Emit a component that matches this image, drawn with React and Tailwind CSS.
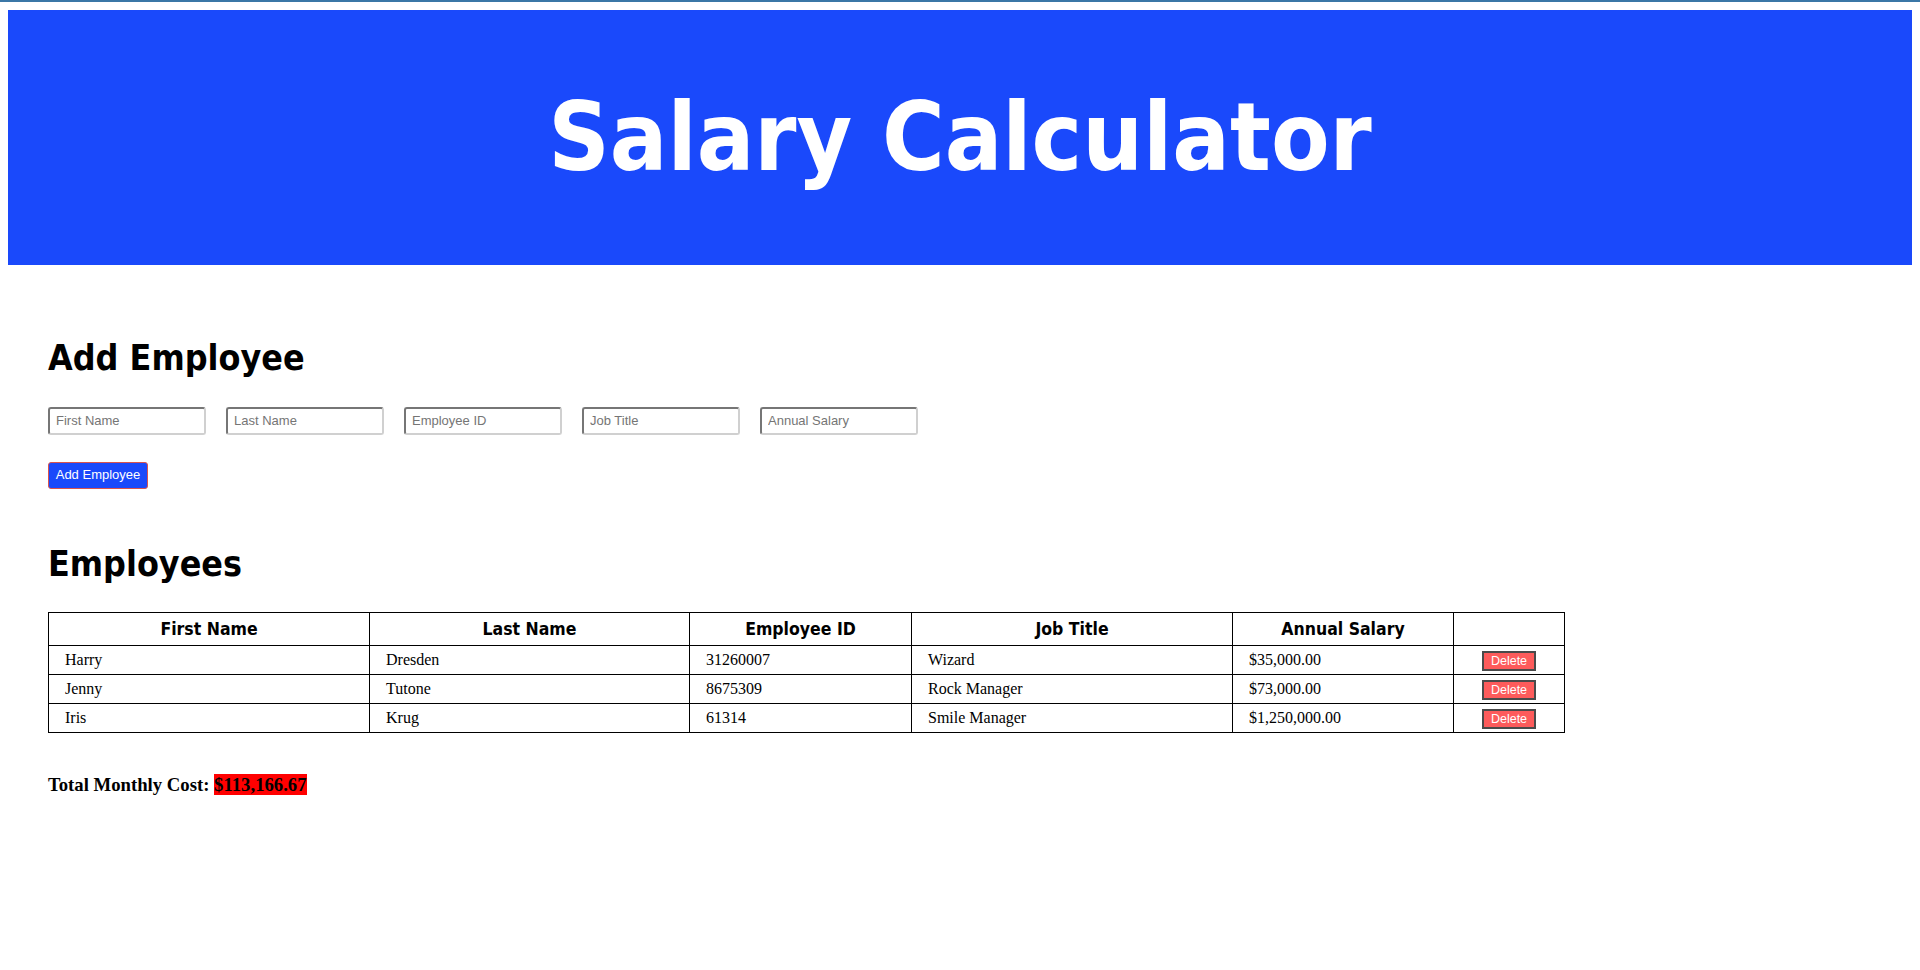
import React from 'react';

const employees = [
  { first: 'Harry', last: 'Dresden', id: '31260007', title: 'Wizard', salary: '$35,000.00' },
  { first: 'Jenny', last: 'Tutone', id: '8675309', title: 'Rock Manager', salary: '$73,000.00' },
  { first: 'Iris', last: 'Krug', id: '61314', title: 'Smile Manager', salary: '$1,250,000.00' },
];

const heading = "[font-family:'DejaVu_Sans_Condensed','DejaVu_Sans',sans-serif]";

export default function App() {
  return (
    <div className="min-h-screen bg-white">
      {/* top strip */}
      <div className="h-[2px] bg-[#3b77a6]" />

      {/* Header */}
      <header className="mx-2 mt-2 h-[255px] flex items-center justify-center bg-[#1a49fb]">
        <h1 className={`${heading} font-bold text-white text-[95px] leading-none`}>Salary Calculator</h1>
      </header>

      <main className="px-[48px]">
        {/* Add Employee */}
        <h2 className={`${heading} font-bold text-black text-[35.5px] leading-none mt-[75px]`}>Add Employee</h2>
        <div className="flex gap-5 mt-[31px]">
          {['First Name', 'Last Name', 'Employee ID', 'Job Title', 'Annual Salary'].map((p) => (
            <input
              key={p}
              placeholder={p}
              className="w-[158px] h-[28px] px-[6px] rounded-[3px] border-2 border-t-[#767676] border-l-[#767676] border-r-[#d0d0d0] border-b-[#d0d0d0] text-[13px] text-black placeholder:text-[#757575] [font-family:'Liberation_Sans',Arial,sans-serif] outline-none"
            />
          ))}
        </div>
        <button className="mt-[27px] w-[100px] h-[27px] rounded-[3px] border border-[#d9534f] bg-[#1a49fb] text-white text-[13px] [font-family:'Liberation_Sans',Arial,sans-serif]">
          Add Employee
        </button>

        {/* Employees */}
        <h2 className={`${heading} font-bold text-black text-[35.5px] leading-none mt-[57px]`}>Employees</h2>
        <table className="mt-[31px] w-[1516px] border-collapse border border-black table-fixed">
          <colgroup>
            <col className="w-[321px]" />
            <col className="w-[320px]" />
            <col className="w-[222px]" />
            <col className="w-[321px]" />
            <col className="w-[221px]" />
            <col className="w-[111px]" />
          </colgroup>
          <thead>
            <tr className="h-[33px]">
              {['First Name', 'Last Name', 'Employee ID', 'Job Title', 'Annual Salary', ''].map((h, i) => (
                <th key={i} className={`${heading} border border-black text-[17.5px] font-bold text-center`}>{h}</th>
              ))}
            </tr>
          </thead>
          <tbody className="[font-family:'Liberation_Serif','Times_New_Roman',serif] text-[16px]">
            {employees.map((e) => (
              <tr key={e.id} className="h-[29px]">
                <td className="border border-black pl-4">{e.first}</td>
                <td className="border border-black pl-4">{e.last}</td>
                <td className="border border-black pl-4">{e.id}</td>
                <td className="border border-black pl-4">{e.title}</td>
                <td className="border border-black pl-4">{e.salary}</td>
                <td className="border border-black text-center">
                  <button className="inline-flex items-center justify-center w-[54px] h-[20px] bg-[#fd5b5b] border-2 border-[#4a4a4a] text-white text-[12.5px] [font-family:'Liberation_Sans',Arial,sans-serif] align-middle">
                    Delete
                  </button>
                </td>
              </tr>
            ))}
          </tbody>
        </table>

        <h3 className="mt-[38px] [font-family:'Liberation_Serif','Times_New_Roman',serif] font-bold text-[18.72px] text-black">
          Total Monthly Cost: <span className="bg-[#ff0000]">$113,166.67</span>
        </h3>
      </main>
    </div>
  );
}
